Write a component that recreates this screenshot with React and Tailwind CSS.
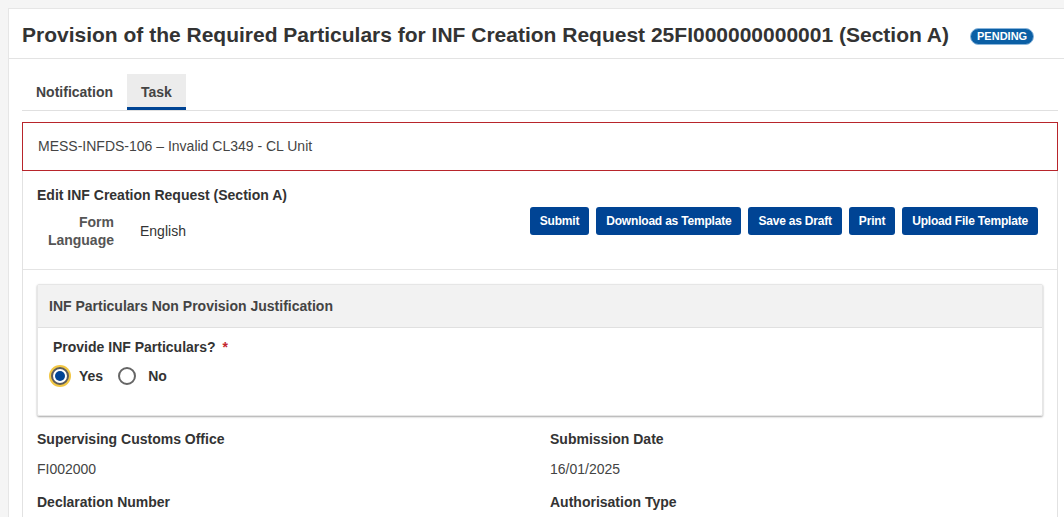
export default function App() {
  const buttons = ["Submit", "Download as Template", "Save as Draft", "Print", "Upload File Template"];

  return (
    <div className="min-h-[517px] bg-[#f5f5f5] pt-[8px] pl-[8px] font-['Liberation_Sans',Arial,sans-serif] text-[#333] overflow-hidden">
      <div className="bg-white border border-[#e6e6e6] border-r-0 min-h-[509px]">
        {/* header */}
        <div className="h-[50px] flex items-center pl-[13px] pt-[2px] border-b border-[#e3e3e3]">
          <h1 className="text-[21px] font-bold text-[#333] whitespace-nowrap">
            Provision of the Required Particulars for INF Creation Request 25FI000000000001 (Section A)
          </h1>
          <span className="ml-[21px] mt-[3px] rounded-full bg-[#0b5fa5] border border-[#8ab6dc] px-[6px] h-[17px] leading-[15px] text-[11px] font-bold text-white">
            PENDING
          </span>
        </div>

        <div className="pl-[13px] pr-[6px]">
          {/* tabs */}
          <div className="flex mt-[15px] border-b border-[#e0e0e0] h-[37px]">
            <div className="px-[14px] flex items-center text-[14px] font-bold text-[#444]">Notification</div>
            <div className="px-[14px] flex items-center text-[14px] font-bold text-[#444] bg-[#ececec] border-b-[3px] border-[#004494] pt-[3px]">
              Task
            </div>
          </div>

          <div className="mt-[11px] border-x border-[#e2e2e2] min-h-[400px]">
            {/* error */}
            <div className="h-[49px] -mx-px border border-[#b8252b] flex items-center pl-[15px] text-[14px] text-[#444]">
              MESS-INFDS-106 – Invalid CL349 - CL Unit
            </div>

            {/* edit section */}
            <div className="px-[14px] pt-[14px] pb-[20px] border-b border-[#e4e4e4]">
              <div className="text-[14px] font-bold text-[#333]">Edit INF Creation Request (Section A)</div>
              <div className="flex items-start">
                <div className="w-[77px] text-right text-[14px] font-bold text-[#555] leading-[18px] pt-[7px]">
                  Form
                  <br />
                  Language
                </div>
                <div className="ml-[26px] text-[14px] text-[#333] pt-[15px]">English</div>
                <div className="ml-auto flex gap-[7px] pr-[5px] mt-[1px]">
                  {buttons.map((b) => (
                    <button
                      key={b}
                      className="h-[28px] px-[10px] rounded-[3px] bg-[#004494] text-white text-[12px] font-bold tracking-[-0.2px]"
                    >
                      {b}
                    </button>
                  ))}
                </div>
              </div>
            </div>

            {/* panel */}
            <div className="mx-[14px] mt-[14px] rounded-[2px] border border-[#e6e6e6] shadow-[0_1px_2px_rgba(0,0,0,0.35)]">
              <div className="h-[43px] bg-[#f2f2f2] border-b border-[#e0e0e0] flex items-center pl-[11px] text-[14px] font-bold text-[#444]">
                INF Particulars Non Provision Justification
              </div>
              <div className="pl-[15px] pt-[9px] h-[87px]">
                <div className="text-[14px] font-bold text-[#333]">
                  Provide INF Particulars? <span className="text-[#c4262e] ml-[3px]">*</span>
                </div>
                <div className="flex items-center mt-[7px] -ml-[4px]">
                  <span className="w-[22px] h-[22px] rounded-full bg-[#f2c744] flex items-center justify-center">
                    <span className="w-[18px] h-[18px] rounded-full border-2 border-[#5c5c5c] bg-white flex items-center justify-center">
                      <span className="w-[10px] h-[10px] rounded-full bg-[#004494]" />
                    </span>
                  </span>
                  <span className="ml-[8px] text-[14px] font-bold text-[#333]">Yes</span>
                  <span className="ml-[15px] w-[18px] h-[18px] rounded-full border-2 border-[#666] bg-white" />
                  <span className="ml-[12px] text-[14px] font-bold text-[#333]">No</span>
                </div>
              </div>
            </div>

            {/* fields */}
            <div className="grid grid-cols-[513px_1fr] pl-[14px] pt-[13px]">
              <div>
                <div className="text-[14px] font-bold text-[#333]">Supervising Customs Office</div>
                <div className="mt-[9px] text-[14px] text-[#444]">FI002000</div>
                <div className="mt-[12px] text-[14px] font-bold text-[#333]">Declaration Number</div>
              </div>
              <div>
                <div className="text-[14px] font-bold text-[#333]">Submission Date</div>
                <div className="mt-[9px] text-[14px] text-[#444]">16/01/2025</div>
                <div className="mt-[12px] text-[14px] font-bold text-[#333]">Authorisation Type</div>
              </div>
            </div>
          </div>
        </div>
      </div>
    </div>
  );
}
